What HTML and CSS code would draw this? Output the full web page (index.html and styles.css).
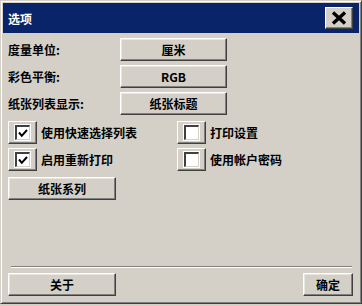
FILE: index.html
```html
<!DOCTYPE html>
<html>
<head>
<meta charset="utf-8">
<link rel="stylesheet" href="styles.css">
</head>
<body>
<div class="window">
  <div class="titlebar">
    <span class="title">选项</span>
    <button class="close" aria-label="close">
      <svg width="16" height="14" viewBox="0 0 16 14"><path d="M2 1.5 L14 12.5 M14 1.5 L2 12.5" stroke="#000" stroke-width="3.4" fill="none"/></svg>
    </button>
  </div>
  <div class="content">
    <div class="row"><span class="label">度量单位:</span><button class="btn wide">厘米</button></div>
    <div class="row"><span class="label">彩色平衡:</span><button class="btn wide">RGB</button></div>
    <div class="row"><span class="label">纸张列表显示:</span><button class="btn wide">纸张标题</button></div>
    <div class="checks">
      <div class="col">
        <div class="check"><span class="cbtn"><span class="cbox"><svg width="10" height="9" viewBox="0 0 10 9"><path d="M1 3.5 L3.8 6.8 L9 1" stroke="#000" stroke-width="2" fill="none"/></svg></span></span><span class="clabel">使用快速选择列表</span></div>
        <div class="check"><span class="cbtn"><span class="cbox"><svg width="10" height="9" viewBox="0 0 10 9"><path d="M1 3.5 L3.8 6.8 L9 1" stroke="#000" stroke-width="2" fill="none"/></svg></span></span><span class="clabel">启用重新打印</span></div>
      </div>
      <div class="col">
        <div class="check"><span class="cbtn"><span class="cbox"></span></span><span class="clabel">打印设置</span></div>
        <div class="check"><span class="cbtn"><span class="cbox"></span></span><span class="clabel">使用帐户密码</span></div>
      </div>
    </div>
    <div class="row"><button class="btn series">纸张系列</button></div>
    <div class="spacer"></div>
    <div class="sep"></div>
    <div class="footer">
      <button class="btn series">关于</button>
      <button class="btn ok">确定</button>
    </div>
  </div>
</div>
</body>
</html>
```

FILE: styles.css
```css
html, body {
  margin: 0;
  padding: 0;
  background: #d4d0c8;
}
body {
  font-family: "Noto Sans CJK SC", "Liberation Sans", sans-serif;
  font-size: 12px;
  color: #000;
}
.window {
  width: 362px;
  height: 304px;
  box-sizing: border-box;
  background: #d4d0c8;
  border-top: 1px solid #d4d0c8;
  border-left: 1px solid #d4d0c8;
  border-right: 1px solid #404040;
  border-bottom: 1px solid #404040;
  box-shadow: inset 1px 1px 0 #fff, inset -1px -1px 0 #808080;
  padding: 2px;
  display: flex;
  flex-direction: column;
}
.titlebar {
  height: 30px;
  background: #0a246a;
  display: flex;
  align-items: center;
  justify-content: space-between;
  padding: 0 6px 0 5px;
  flex: none;
}
.title {
  color: #fff;
  font-weight: 700;
  font-size: 12px;
}
.close {
  width: 28px;
  height: 22px;
  padding: 0;
  margin: 0;
  background: #d4d0c8;
  border-top: 1px solid #fff;
  border-left: 1px solid #fff;
  border-right: 1px solid #404040;
  border-bottom: 1px solid #404040;
  box-shadow: inset -1px -1px 0 #808080;
  display: flex;
  align-items: center;
  justify-content: center;
}
.content {
  flex: 1;
  display: flex;
  flex-direction: column;
  padding: 5px 6px 5px 5px;
}
.row {
  display: flex;
  align-items: center;
  margin-bottom: 4px;
}
.label {
  width: 112px;
  font-weight: 700;
}
.btn {
  font-family: inherit;
  font-size: 12px;
  font-weight: 700;
  color: #000;
  background: #d4d0c8;
  padding: 0;
  margin: 0;
  height: 23px;
  border-top: 1px solid #fff;
  border-left: 1px solid #fff;
  border-right: 1px solid #404040;
  border-bottom: 1px solid #404040;
  box-shadow: inset -1px -1px 0 #808080, inset 1px 1px 0 #e8e6e1;
}
.wide { width: 107px; }
.series { width: 108px; }
.ok { width: 50px; }
.checks {
  display: flex;
  margin-top: 2px;
  margin-bottom: 6px;
}
.col {
  display: flex;
  flex-direction: column;
  gap: 4px;
}
.col:first-child { width: 169px; }
.check {
  display: flex;
  align-items: center;
}
.cbtn {
  width: 29px;
  height: 23px;
  box-sizing: border-box;
  background: #d4d0c8;
  border-top: 1px solid #fff;
  border-left: 1px solid #fff;
  border-right: 1px solid #404040;
  border-bottom: 1px solid #404040;
  box-shadow: inset -1px -1px 0 #808080;
  display: flex;
  align-items: center;
  justify-content: center;
}
.cbox {
  width: 15px;
  height: 15px;
  box-sizing: border-box;
  background: #fff;
  border-top: 2px solid #404040;
  border-left: 2px solid #404040;
  border-right: 1px solid #d4d0c8;
  border-bottom: 1px solid #d4d0c8;
  box-shadow: 0 0 0 1px #fff;
  display: flex;
  align-items: center;
  justify-content: center;
}
.clabel {
  margin-left: 4px;
  font-weight: 700;
}
.spacer { flex: 1; }
.sep {
  height: 1px;
  background: #808080;
  border-bottom: 1px solid #fff;
  margin: 0 1px 5px 3px;
}
.footer {
  display: flex;
  justify-content: space-between;
}
.footer .btn { height: 23px; }
```
